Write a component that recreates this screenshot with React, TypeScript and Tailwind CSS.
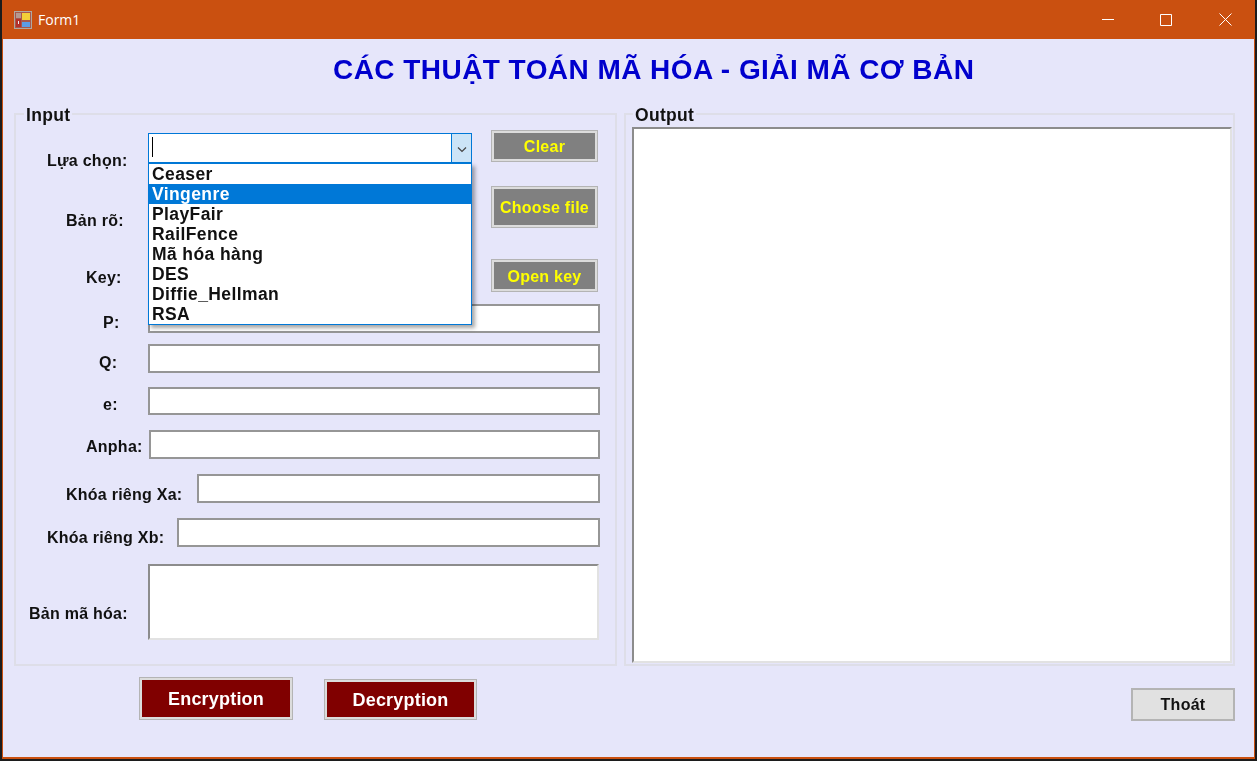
const algorithms = ["Ceaser", "Vingenre", "PlayFair", "RailFence", "Mã hóa hàng", "DES", "Diffie_Hellman", "RSA"];

function AppIcon() {
  return (
    <svg width="18" height="18" viewBox="0 0 18 18" className="shrink-0">
      <rect x="0" y="0" width="18" height="18" fill="#b0a8a0" />
      <rect x="1" y="1" width="16" height="16" fill="#a8584c" />
      <rect x="2" y="2" width="5" height="5" fill="#b59a90" />
      <rect x="8" y="2" width="8" height="7" fill="#f2d038" />
      <rect x="2" y="8" width="5" height="8" fill="#b4302a" />
      <rect x="4" y="10" width="1" height="3" fill="#eeeeee" />
      <rect x="8" y="11" width="8" height="5" fill="#5c9ce6" />
    </svg>
  );
}

function WindowControls() {
  return (
    <div className="ml-auto flex items-center">
      <svg width="12" height="12" viewBox="0 0 12 12" className="mr-[46px]">
        <path d="M0 5.5H12" stroke="white" strokeWidth="1" />
      </svg>
      <svg width="12" height="12" viewBox="0 0 12 12" className="mr-[47px]">
        <path d="M.5 .5H11.5V11.5H.5Z" fill="none" stroke="white" strokeWidth="1" />
      </svg>
      <svg width="13" height="13" viewBox="0 0 13 13" className="mr-[22px]">
        <path d="M.5 .5L12.5 12.5M12.5 .5L.5 12.5" stroke="white" strokeWidth="1" />
      </svg>
    </div>
  );
}

function FlatButton({ label, className, fill }: { label: string; className: string; fill: string }) {
  return (
    <button className={`flex border border-[#b4b4b4] bg-[#dcdcdc] p-[2px] font-bold ${className}`}>
      <span className={`flex flex-1 items-center justify-center pt-[2px] ${fill}`}>{label}</span>
    </button>
  );
}

function Field(props: { label: string; labelClass: string; inputClass: string; rowClass: string }) {
  return (
    <div className={`flex ${props.rowClass}`}>
      <label className={`shrink-0 text-[16px] leading-[20px] font-bold tracking-[0.25px] whitespace-nowrap text-[#111] ${props.labelClass}`}>
        {props.label}
      </label>
      <input className={`min-w-0 flex-1 border-2 border-[#969696] bg-white ${props.inputClass}`} />
    </div>
  );
}

export default function App() {
  return (
    <div className="h-[761px] w-[1257px] overflow-hidden bg-[#1c1c1c] px-[2px] font-['Liberation_Sans',Arial,sans-serif]">
      <div className="flex h-[759px] flex-col border-x border-b-2 border-[#ca5010] bg-[#e6e6fa]">
        <header className="flex h-[39px] shrink-0 items-center bg-[#ca5010] text-white">
          <div className="ml-[11px]">
            <AppIcon />
          </div>
          <span className="ml-[6px] font-['Open_Sans',sans-serif] text-[14px]">Form1</span>
          <WindowControls />
        </header>

        <div className="flex flex-1 flex-col blur-[0.4px]">
          <h1 className="mt-[14px] ml-[330px] h-[34px] text-[28px] leading-[34px] font-bold tracking-[0.45px] whitespace-nowrap text-[#0000cd]">
            CÁC THUẬT TOÁN MÃ HÓA - GIẢI MÃ CƠ BẢN
          </h1>

          <div className="mt-[26px] ml-[11px] flex gap-[7px]">
            {/* Input group */}
            <section className="relative h-[553px] w-[603px] border-2 border-[#dedee8]">
              <span className="absolute -top-[9px] left-[8px] bg-[#e6e6fa] px-[2px] text-[17.5px] leading-[18px] font-bold tracking-[0.3px] text-[#111]">
                Input
              </span>

              <div className="flex h-[177px]">
                <div className="relative w-[456px]">
                  <div className="mt-[18px] flex">
                    <label className="mt-[18px] w-[132px] pl-[31px] text-[16px] leading-[20px] font-bold tracking-[0.25px] text-[#111]">
                      Lựa chọn:
                    </label>
                    <div className="flex h-[30px] flex-1 border border-[#0078d7] bg-white">
                      <span className="mt-[3px] ml-[3px] h-[20px] w-px bg-black" />
                      <span className="ml-auto flex w-[20px] items-center justify-center border-l border-[#0078d7] bg-[#cce4f7]">
                        <svg width="10" height="6" viewBox="0 0 10 6" className="mt-[3px]">
                          <path d="M1 .5L5 4.5L9 .5" fill="none" stroke="#444" strokeWidth="1.2" />
                        </svg>
                      </span>
                    </div>
                  </div>
                  <label className="mt-[40px] block pl-[50px] text-[16px] leading-[20px] font-bold tracking-[0.25px] text-[#111]">
                    Bản rõ:
                  </label>
                  <label className="mt-[37px] block pl-[70px] text-[16px] leading-[20px] font-bold tracking-[0.25px] text-[#111]">
                    Key:
                  </label>

                  {/* open dropdown list */}
                  <ul className="absolute top-[48px] left-[132px] z-10 w-[324px] border border-[#0078d7] bg-white text-[17.5px] leading-[20px] font-bold tracking-[0.4px] text-[#111] shadow-[3px_3px_4px_rgba(0,0,0,0.35)]">
                    {algorithms.map((name) => (
                      <li key={name} className={`h-[20px] pl-[3px] ${name === "Vingenre" ? "bg-[#0078d7] text-white" : ""}`}>
                        {name}
                      </li>
                    ))}
                  </ul>
                </div>

                <div className="ml-[19px] flex w-[107px] flex-col text-[16px] tracking-[0.25px] text-[#ffff00]">
                  <FlatButton label="Clear" fill="bg-[#808080]" className="mt-[15px] h-[32px]" />
                  <FlatButton label="Choose file" fill="bg-[#808080]" className="mt-[24px] h-[43px] whitespace-nowrap" />
                  <FlatButton label="Open key" fill="bg-[#808080]" className="mt-[31px] h-[33px]" />
                </div>
              </div>

              <div className="pr-[15px]">
                <Field label="P:" rowClass="mt-[12px]" labelClass="mt-[9px] w-[132px] pl-[87px]" inputClass="h-[29px]" />
                <Field label="Q:" rowClass="mt-[11px]" labelClass="mt-[9px] w-[132px] pl-[83px]" inputClass="h-[29px]" />
                <Field label="e:" rowClass="mt-[14px]" labelClass="mt-[8px] w-[132px] pl-[87px]" inputClass="h-[28px]" />
                <Field label="Anpha:" rowClass="mt-[15px]" labelClass="mt-[7px] w-[133px] pl-[70px]" inputClass="h-[29px]" />
                <Field label="Khóa riêng Xa:" rowClass="mt-[15px] h-[29px]" labelClass="mt-[11px] w-[181px] pl-[50px]" inputClass="h-[29px]" />
                <Field label="Khóa riêng Xb:" rowClass="mt-[15px] h-[29px]" labelClass="mt-[10px] w-[161px] pl-[31px]" inputClass="h-[29px]" />
                <div className="mt-[17px] flex">
                  <label className="mt-[40px] w-[132px] pl-[13px] text-[16px] leading-[20px] font-bold tracking-[0.25px] text-[#111]">
                    Bản mã hóa:
                  </label>
                  <textarea className="mr-px h-[76px] flex-1 resize-none border-2 border-[#e2e2e2] border-t-[#8c8c8c] border-l-[#8c8c8c] bg-white" />
                </div>
              </div>
            </section>

            {/* Output group */}
            <section className="relative h-[553px] w-[611px] border-2 border-[#dedee8] px-[6px] pt-[12px]">
              <span className="absolute -top-[9px] left-[7px] bg-[#e6e6fa] px-[2px] text-[17.5px] leading-[18px] font-bold tracking-[0.3px] text-[#111]">
                Output
              </span>
              <textarea className="h-[536px] w-[600px] resize-none border-2 border-[#e2e2e2] border-t-[#8c8c8c] border-l-[#8c8c8c] bg-white" />
            </section>
          </div>

          <div className="flex items-start text-white">
            <FlatButton label="Encryption" fill="bg-[#800000]" className="mt-[11px] ml-[136px] h-[43px] w-[154px] text-[18px] tracking-[0.2px]" />
            <FlatButton label="Decryption" fill="bg-[#800000]" className="mt-[13px] ml-[31px] h-[41px] w-[153px] text-[18px] tracking-[0.2px]" />
            <button className="mt-[22px] mr-[19px] ml-auto h-[33px] w-[104px] border-2 border-[#b4b4b4] bg-[#e1e1e1] pt-px text-[16px] font-bold tracking-[0.25px] text-[#111]">
              Thoát
            </button>
          </div>
        </div>
      </div>
    </div>
  );
}
